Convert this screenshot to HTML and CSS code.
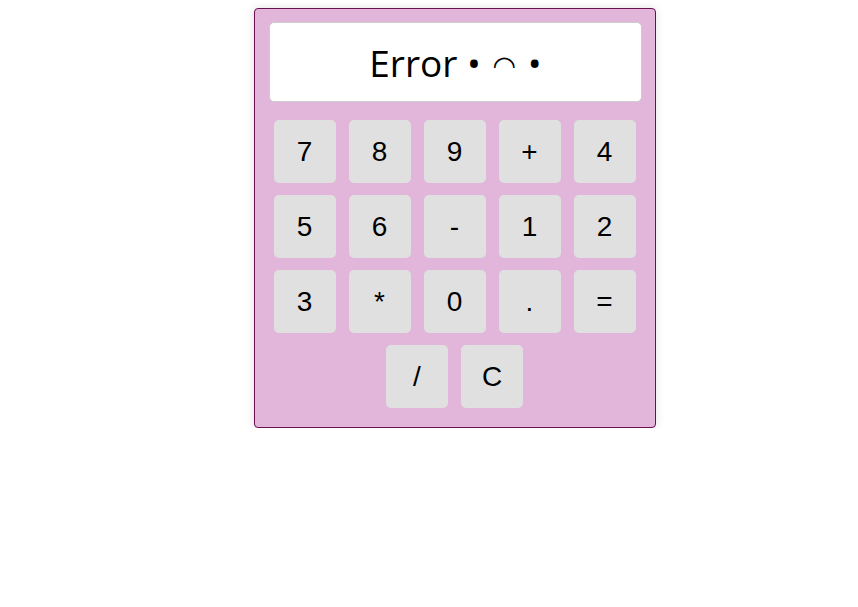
FILE: index.html
```html
<!DOCTYPE html>
<html>
<head>
<meta charset="utf-8">
<link rel="stylesheet" href="styles.css">
</head>
<body>
<div class="calc">
  <div class="display">Error • <span class="arc">◠</span> •</div>
  <div class="keys">
    <button class="key">7</button>
    <button class="key">8</button>
    <button class="key">9</button>
    <button class="key">+</button>
    <button class="key">4</button>
    <button class="key">5</button>
    <button class="key">6</button>
    <button class="key">-</button>
    <button class="key">1</button>
    <button class="key">2</button>
    <button class="key">3</button>
    <button class="key">*</button>
    <button class="key">0</button>
    <button class="key">.</button>
    <button class="key">=</button>
    <button class="key">/</button>
    <button class="key">C</button>
  </div>
</div>
</body>
</html>
```
FILE: styles.css
```css
html, body {
  margin: 0;
  padding: 0;
  background: #ffffff;
}
body {
  display: flex;
  justify-content: center;
  padding-top: 8px;
  padding-left: 52px;
}
.calc {
  width: 400px;
  box-sizing: content-box;
  background: #e1b6da;
  border: 1px solid #6a1050;
  border-radius: 4px;
  box-shadow: 0 0 10px rgba(0, 0, 0, 0.12);
  padding: 13px 0 19px;
}
.display {
  margin: 0 13px 0 14px;
  height: 78px;
  background: #ffffff;
  border: 1px solid #cccccc;
  border-radius: 5px;
  display: flex;
  align-items: center;
  justify-content: center;
  font-family: "Open Sans", "Noto Sans", sans-serif;
  font-size: 37px;
  color: #000;
  white-space: pre;
}
.arc {
  font-family: "DejaVu Sans", sans-serif;
  font-size: 27px;
  position: relative;
  top: 3px;
  padding: 0 2px;
}
.keys {
  margin-top: 18px;
  display: flex;
  flex-wrap: wrap;
  justify-content: center;
  gap: 12px 13px;
  padding: 0 19px 0 18px;
}
.key {
  width: 62px;
  height: 63px;
  border: none;
  border-radius: 5px;
  background: #e0e0e0;
  font-family: "Liberation Sans", Arial, sans-serif;
  font-size: 28px;
  color: #000;
  padding: 0;
}
```
